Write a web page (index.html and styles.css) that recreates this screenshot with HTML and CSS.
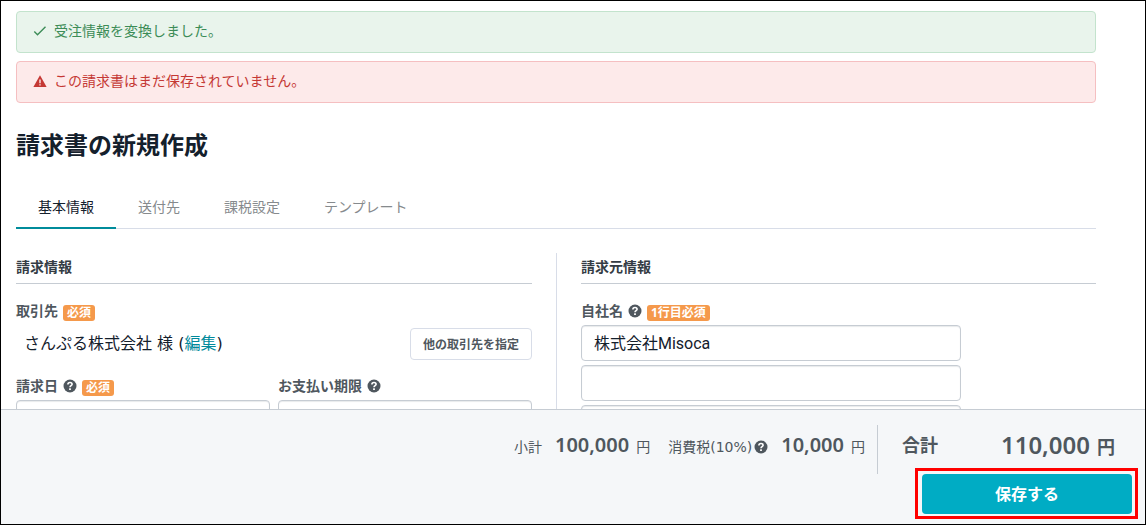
FILE: index.html
```html
<!DOCTYPE html>
<html lang="ja">

<head>
    <meta charset="UTF-8">
    <meta name="viewport" content="width=device-width, initial-scale=1.0">
    <title>請求書の新規作成</title>
    <link rel="stylesheet" href="styles.css">
</head>

<body>
    <svg class="icon-defs" aria-hidden="true">
        <symbol id="icon-help" viewBox="0 0 14 14">
            <circle cx="7" cy="7" r="6.5" fill="currentColor" />
            <path d="M4.9 5.5C4.9 4.2 5.8 3.5 7 3.5s2.1.7 2.1 1.8C9.1 6.7 7 6.7 7 8.3" fill="none" stroke="#fff" stroke-width="1.6" />
            <rect x="6.1" y="9.3" width="1.8" height="1.7" fill="#fff" />
        </symbol>
    </svg>

    <div class="app">
        <main class="content">
            <div class="alert alert-success">
                <svg class="alert-icon" viewBox="0 0 14 14">
                    <path d="M1.3 7.6l3.2 3.1 8-8" fill="none" stroke="currentColor" stroke-width="1.4" />
                </svg>
                <span>受注情報を変換しました。</span>
            </div>
            <div class="alert alert-danger">
                <svg class="alert-icon" viewBox="0 0 14 14">
                    <path d="M7 1.2L13.6 13H.4z" fill="currentColor" />
                    <path d="M6.3 5.6h1.4v3.6H6.3zM6.3 10.2h1.4v1.4H6.3z" fill="#fdeaea" />
                </svg>
                <span>この請求書はまだ保存されていません。</span>
            </div>

            <h1>請求書の新規作成</h1>

            <nav class="tabs">
                <a href="#basic" class="tab active">基本情報</a>
                <a href="#destination" class="tab">送付先</a>
                <a href="#tax" class="tab">課税設定</a>
                <a href="#template" class="tab">テンプレート</a>
            </nav>

            <form id="invoice-form" class="columns">
                <section class="column">
                    <h2>請求情報</h2>
                    <div class="field-label">
                        <span>取引先</span>
                        <span class="badge">必須</span>
                    </div>
                    <div class="customer">
                        <span class="customer-name">さんぷる株式会社 様 (<a href="#edit">編集</a>)</span>
                        <button type="button" class="btn-outline">他の取引先を指定</button>
                    </div>
                    <div class="dates">
                        <div>
                            <div class="field-label">
                                <label for="billingDate">請求日</label>
                                <svg class="help"><use href="#icon-help" /></svg>
                                <span class="badge">必須</span>
                            </div>
                            <input type="text" id="billingDate">
                        </div>
                        <div>
                            <div class="field-label">
                                <label for="dueDate">お支払い期限</label>
                                <svg class="help"><use href="#icon-help" /></svg>
                            </div>
                            <input type="text" id="dueDate">
                        </div>
                    </div>
                </section>

                <section class="column">
                    <h2>請求元情報</h2>
                    <div class="field-label">
                        <label for="companyName1">自社名</label>
                        <svg class="help"><use href="#icon-help" /></svg>
                        <span class="badge">1行目必須</span>
                    </div>
                    <div class="company">
                        <input type="text" id="companyName1" value="株式会社Misoca">
                        <input type="text" id="companyName2" aria-label="自社名 2行目">
                        <input type="text" id="companyName3" aria-label="自社名 3行目">
                    </div>
                </section>
            </form>
        </main>

        <footer class="summary">
            <div class="totals">
                <div class="total-item">
                    <span>小計</span>
                    <strong>100,000</strong>
                    <span>円</span>
                </div>
                <div class="total-item">
                    <span class="tax-label">消費税(10%)<svg class="help"><use href="#icon-help" /></svg></span>
                    <strong>10,000</strong>
                    <span>円</span>
                </div>
                <div class="grand-total">
                    <span>合計</span>
                    <span class="grand-amount"><strong>110,000</strong><span>円</span></span>
                </div>
            </div>
            <div class="save">
                <button type="submit" form="invoice-form" class="btn-save">保存する</button>
            </div>
        </footer>
    </div>
</body>

</html>
```
FILE: styles.css
```css
* {
    box-sizing: border-box;
}

body {
    margin: 0;
    font-family: "Noto Sans", "Noto Sans CJK JP", sans-serif;
    font-size: 14px;
    line-height: 20px;
    color: #4f575e;
    background-color: #fff;
}

a {
    color: #00899b;
    text-decoration: none;
}

input,
button {
    font-family: Roboto, "Noto Sans CJK JP", sans-serif;
}

.icon-defs {
    display: none;
}

.app {
    display: flex;
    flex-direction: column;
    height: 100vh;
    border: 1px solid #000;
}

.content {
    flex: 1;
    min-height: 0;
    overflow: hidden;
    padding: 10px 49px 0 15px;
}

/* Messages */
.alert {
    display: flex;
    align-items: center;
    gap: 7px;
    height: 42px;
    margin-bottom: 8px;
    padding: 0 16px 2px;
    border: 1px solid;
    border-radius: 4px;
}

.alert-icon {
    width: 14px;
    height: 14px;
}

.alert-success {
    color: #3c8c57;
    background-color: #e9f4ec;
    border-color: #c3e3cd;
}

.alert-danger {
    color: #c53834;
    background-color: #fdeaea;
    border-color: #f5bfc1;
}

h1 {
    margin: 28px 0 0;
    font-size: 24px;
    line-height: 28px;
    color: #14202c;
}

/* Tabs */
.tabs {
    display: flex;
    margin-top: 28px;
    border-bottom: 1px solid #d8dde8;
}

.tab {
    margin-bottom: -1px;
    padding: 10px 22px;
    border-bottom: 2px solid transparent;
    color: #868a8d;
}

.tab.active {
    color: #14202c;
    border-bottom-color: #008c9b;
}

/* Form */
.columns {
    display: grid;
    grid-template-columns: 1fr 1fr;
    margin-top: 24px;
}

.column {
    padding-right: 24px;
}

.column + .column {
    padding: 0 0 20px 24px;
    border-left: 1px solid #d8dde8;
}

h2 {
    margin: 0 0 18px;
    padding: 4px 0 6px;
    border-bottom: 1px solid #c6ccd3;
    font-size: 14px;
    font-weight: 700;
    color: #343c44;
}

.field-label {
    display: flex;
    align-items: center;
    gap: 5px;
    height: 18px;
    margin-bottom: 5px;
    font-weight: 700;
}

.help {
    width: 14px;
    height: 14px;
    flex: none;
}

.badge {
    margin-top: 3px;
    padding: 0 4px;
    border-radius: 3px;
    background-color: #f5994b;
    color: #fff;
    font-size: 12px;
    font-weight: 700;
    line-height: 16px;
}

input {
    display: block;
    width: 100%;
    height: 36px;
    padding: 0 12px 2px;
    border: 1px solid #c6ccd3;
    border-radius: 4px;
    box-shadow: inset 0 1px 1px #e8eaec;
    background-color: #fff;
    color: #14202c;
    font-size: 16px;
}

.customer {
    display: flex;
    justify-content: space-between;
    align-items: center;
    margin: 8px 0 17px;
    padding-left: 8px;
}

.customer-name {
    font-family: "DejaVu Sans", "Noto Sans CJK JP", sans-serif;
    font-size: 16px;
    color: #14202c;
}

.btn-outline {
    height: 32px;
    padding: 0 12px 1px;
    border: 1px solid #d8dde8;
    border-radius: 4px;
    background-color: #fff;
    color: #4f575e;
    font-size: 12px;
    font-weight: 700;
}

.dates {
    display: grid;
    grid-template-columns: 1fr 1fr;
    gap: 8px;
}

.company {
    display: grid;
    gap: 4px;
    max-width: 380px;
}

/* Footer with totals */
.summary {
    padding: 15px 13px 10px;
    border-top: 1px solid #c6ccd3;
    background-color: #f5f7f9;
}

.totals {
    display: flex;
    justify-content: flex-end;
}

.total-item {
    display: flex;
    align-items: baseline;
    margin-right: 18px;
    padding-top: 6px;
    line-height: 28px;
}

.total-item + .total-item {
    margin-right: 12px;
}

.total-item strong {
    margin: 0 7px 0 13px;
    font-size: 20px;
    font-weight: 600;
}

.tax-label {
    display: flex;
    align-items: center;
    gap: 2px;
    font-family: "DejaVu Sans", "Noto Sans CJK JP", sans-serif;
}

.grand-total {
    display: flex;
    justify-content: space-between;
    width: 255px;
    height: 49px;
    padding: 5px 17px 0 24px;
    border-left: 1px solid #c6ccd3;
    font-size: 18px;
    font-weight: 700;
    line-height: 30px;
}

.grand-amount {
    display: flex;
    align-items: baseline;
    gap: 7px;
}

.grand-amount strong {
    font-size: 24px;
    font-weight: 600;
}

.save {
    position: relative;
    width: 210px;
    margin-left: auto;
}

/* Highlight frame around the save button */
.save::before {
    content: "";
    position: absolute;
    inset: -6px -6px -5px -7px;
    border: 3px solid #f00;
    pointer-events: none;
}

.btn-save {
    display: block;
    width: 100%;
    height: 40px;
    padding-bottom: 3px;
    border: none;
    border-radius: 4px;
    background-color: #00acc4;
    color: #fff;
    font-size: 16px;
    font-weight: 700;
    cursor: pointer;
}
```
